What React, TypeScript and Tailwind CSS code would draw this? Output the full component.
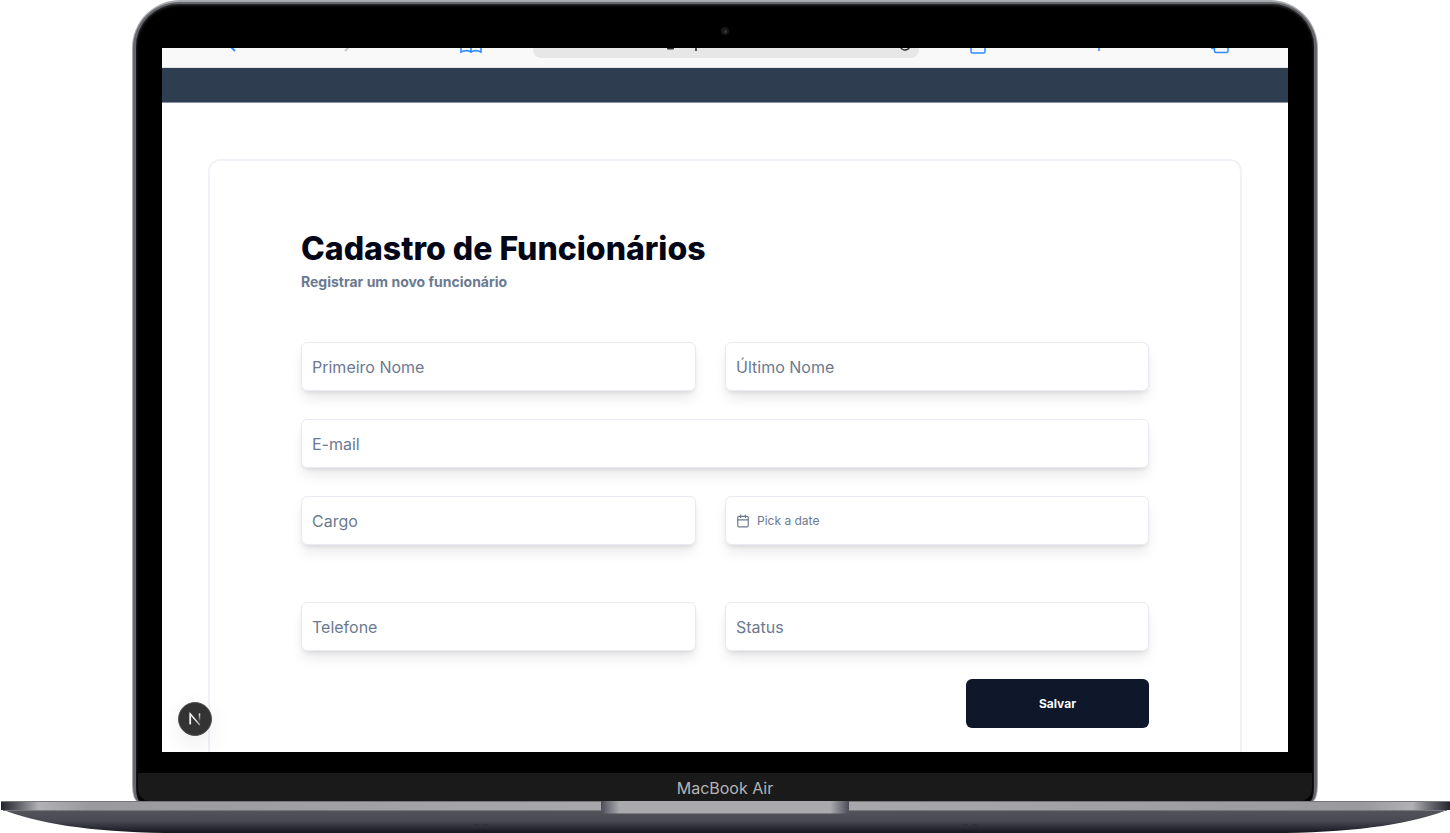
import { Calendar } from 'lucide-react';

const fieldBox =
  'h-[49px] w-full min-w-0 rounded-md border border-[#e9ebf2] bg-white px-[10px] text-left shadow-[0_9px_14px_-2px_rgba(0,0,0,0.09),0_3px_5px_-2px_rgba(0,0,0,0.10)] outline-none';

type FieldProps = { label: string; name: string; type?: string; wide?: boolean };

function Field({ label, name, type = 'text', wide = false }: FieldProps) {
  return (
    <div className={wide ? 'col-span-2 grid items-center' : 'grid items-center'}>
      <input
        id={name}
        className={`${fieldBox} peer col-start-1 row-start-1 text-base text-slate-900`}
        name={name}
        type={type}
        placeholder=" "
      />
      <label
        htmlFor={name}
        className="pointer-events-none z-10 col-start-1 row-start-1 justify-self-start px-[11px] pt-px text-base leading-6 text-[#6b7a90] peer-[:not(:placeholder-shown)]:invisible"
      >
        {label}
      </label>
    </div>
  );
}

function BrowserToolbar() {
  return (
    <div className="flex h-5 shrink-0 items-end gap-[51px] overflow-hidden border-b border-[#dfe2e5] bg-[#f9f9f9] pl-[66px] pr-[59px] text-[#2f8bff]">
      <div className="flex h-10 basis-[254px] grow items-center justify-between">
        <svg className="h-10 w-[10px]" viewBox="0 0 10 40" fill="none" stroke="currentColor" strokeWidth="2">
          <path d="m7 8-8 8 8 8" />
        </svg>
        <svg className="h-10 w-[10px]" viewBox="0 0 10 40" fill="none" stroke="#c8c8ca" strokeWidth="2">
          <path d="m1 8 8 8-8 8" />
        </svg>
        <svg className="h-10 w-[22px]" viewBox="0 0 22 40" fill="none" stroke="currentColor" strokeWidth="1.6">
          <path d="M1 11c4-2 7-2 10 0 3-2 6-2 10 0v14c-4-2-7-2-10 0-3-2-6-2-10 0zM11 11v14" />
        </svg>
      </div>
      <div className="flex h-10 basis-[386px] grow items-start">
        <div className="flex h-[31px] w-full items-start justify-between rounded-lg bg-[#e7e7e7] pl-[133px] pr-[5px] text-[#2b2b2f]">
          <svg className="h-[30px] w-9" viewBox="0 0 36 30" fill="none">
            <rect x="1" y="13" width="7" height="9.5" rx="1" fill="currentColor" />
            <path d="M30 16v8" stroke="currentColor" strokeWidth="1.6" />
          </svg>
          <svg className="h-[30px] w-[18px]" viewBox="0 0 18 30" fill="none" stroke="currentColor" strokeWidth="1.4">
            <path d="M14 18.500a5 5 0 1 1-2-4.500" />
          </svg>
        </div>
      </div>
      <div className="flex h-10 basis-[259px] grow items-center justify-between">
        <svg className="h-10 w-4" viewBox="0 0 16 40" fill="none" stroke="currentColor" strokeWidth="1.5">
          <path d="M5 12H1v12.500A1.500 1.500 0 0 0 2.500 26h11a1.500 1.500 0 0 0 1.500-1.500V12h-4M8 20V6M4 10l4-4 4 4" />
        </svg>
        <svg className="h-10 w-[18px]" viewBox="0 0 18 40" fill="none" stroke="currentColor" strokeWidth="1.600">
          <path d="M9 8v16M1 16h16" />
        </svg>
        <svg className="h-10 w-[18px]" viewBox="0 0 18 40" fill="none" stroke="currentColor" strokeWidth="1.500">
          <rect x="3.500" y="11.500" width="13.500" height="14" rx="1.500" />
          <path d="M3.500 21.500h-2A1.500 1.500 0 0 1 0 20V9.500A1.500 1.500 0 0 1 1.500 8H12a1.500 1.500 0 0 1 1.500 1.500v2" />
        </svg>
      </div>
    </div>
  );
}

function EmployeeForm() {
  return (
    <section className="flex-1 px-[46px] pt-14">
      <div className="h-full rounded-t-xl border-2 border-b-0 border-[#f1f2f7] px-[91px] pt-[72px]">
        <h1 className="text-[32px] font-extrabold leading-8 text-[#020617]">Cadastro de Funcionários</h1>
        <p className="mt-[7px] text-sm font-bold leading-5 text-[#6b7a90]">Registrar um novo funcionário</p>
        <form
          className="mt-[50px] grid grid-cols-[395fr_424fr] gap-x-[29px] gap-y-7"
          onSubmit={(e) => e.preventDefault()}
        >
          <Field label="Primeiro Nome" name="firstName" />
          <Field label="Último Nome" name="lastName" />
          <Field label="E-mail" name="email" type="email" wide />
          <Field label="Cargo" name="role" />
          <button type="button" className={`${fieldBox} flex items-center gap-[7px] text-xs text-[#6b7a90]`}>
            <Calendar className="size-[14px]" aria-hidden="true" />
            Pick a date
          </button>
          <div className="col-span-2 mt-[29px] grid grid-cols-subgrid">
            <Field label="Telefone" name="phone" type="tel" />
            <Field label="Status" name="status" />
          </div>
          <button
            type="submit"
            className="col-start-2 h-[49px] w-[183px] justify-self-end rounded-md bg-[#0f172a] text-xs font-bold text-slate-50"
          >
            Salvar
          </button>
        </form>
      </div>
    </section>
  );
}

function DevBadge() {
  return (
    <button
      type="button"
      aria-label="Next.js"
      className="absolute bottom-4 left-4 flex size-[34px] items-center justify-center rounded-full border border-[#555] bg-[#333] shadow-[0_8px_24px_rgba(0,0,0,0.08)]"
    >
      <svg className="size-[14px]" viewBox="0 0 14 14" fill="none" strokeWidth="1.500">
        <defs>
          <linearGradient id="diagonal" x1="6" y1="6" x2="12" y2="13" gradientUnits="userSpaceOnUse">
            <stop stopColor="#fff" />
            <stop offset="1" stopColor="#fff" stopOpacity="0.500" />
          </linearGradient>
          <linearGradient id="stem" x1="11" y1="1" x2="11" y2="9" gradientUnits="userSpaceOnUse">
            <stop stopColor="#fff" />
            <stop offset="1" stopColor="#fff" stopOpacity="0.100" />
          </linearGradient>
        </defs>
        <path d="M2.300 12V2l9.500 11" stroke="url(#diagonal)" />
        <path d="M2.300 12.500V1.500" stroke="#eee" />
        <path d="M11.500 1.500v8" stroke="url(#stem)" />
      </svg>
    </button>
  );
}

function LaptopBase() {
  return (
    <svg className="block h-8 w-full shrink-0" viewBox="0 0 1450 32" preserveAspectRatio="none" aria-hidden="true">
      <defs>
        <linearGradient id="under" x1="0" y1="0" x2="0" y2="1">
          <stop offset="0" stopColor="#54555c" />
          <stop offset="0.500" stopColor="#484952" />
          <stop offset="1" stopColor="#15151f" />
        </linearGradient>
        <linearGradient id="lip" x1="0" y1="0" x2="1" y2="0">
          <stop offset="0" stopColor="#23242d" />
          <stop offset="0.012" stopColor="#5f6067" />
          <stop offset="0.026" stopColor="#b2b2b6" />
          <stop offset="0.060" stopColor="#99999e" />
          <stop offset="0.500" stopColor="#aaaaaf" />
          <stop offset="0.940" stopColor="#99999e" />
          <stop offset="0.974" stopColor="#b2b2b6" />
          <stop offset="0.988" stopColor="#5f6067" />
          <stop offset="1" stopColor="#23242d" />
        </linearGradient>
        <linearGradient id="notch" x1="0" y1="0" x2="1" y2="0">
          <stop offset="0" stopColor="#4b4b57" />
          <stop offset="0.030" stopColor="#73737d" />
          <stop offset="0.075" stopColor="#a9a9ae" />
          <stop offset="0.925" stopColor="#a9a9ae" />
          <stop offset="0.970" stopColor="#73737d" />
          <stop offset="1" stopColor="#4b4b57" />
        </linearGradient>
      </defs>
      <path d="M1 8C35 22 90 31 165 32H1285C1360 31 1415 22 1450 8z" fill="url(#under)" />
      <path d="M1 0H1450V9H1z" fill="url(#lip)" />
      <path d="M1 .5H1450" stroke="#77787c" />
      <path d="M3 9.500H1447" stroke="#77787e" />
      <path d="M601 0H849V8q0 4.500-5 4.500H606q-5 0-5-4.500z" fill="url(#notch)" />
      <path d="M474 24h5m4 0h5M963 24h5m4 0h5" stroke="#30313a" strokeWidth="2" />
    </svg>
  );
}

export default function App() {
  return (
    <main className="flex h-screen flex-col overflow-hidden bg-white font-['Inter',sans-serif]">
      <div className="flex min-h-0 flex-1 flex-col px-33">
        <div className="flex min-h-0 flex-1 flex-col rounded-[48px_48px_5px_5px/48px_48px_16px_16px] bg-[#a9acae] px-px pt-[2px]">
          <div className="flex min-h-0 flex-1 flex-col rounded-[46px_46px_5px_5px/46px_46px_16px_16px] bg-[#66676c] px-[3px] pt-[2px]">
            <div className="flex min-h-0 flex-1 flex-col rounded-[43px_43px_4px_4px/43px_43px_14px_14px] bg-black px-[2px] shadow-[inset_0_1px_3px_#3a3b3d]">
              <div className="flex h-11 shrink-0 items-center justify-center pt-[10px]">
                <div className="flex size-2 items-center justify-center rounded-full bg-[#17171a]">
                  <div className="size-[3px] rounded-full bg-[#34353a]" />
                </div>
              </div>
              <div className="relative mx-6 flex min-h-0 flex-1 flex-col overflow-hidden bg-white">
                <BrowserToolbar />
                <header className="h-[35px] shrink-0 border-b border-[#8a94a0] bg-[#2e3e50]" />
                <EmployeeForm />
                <DevBadge />
              </div>
              <div className="h-[21px] shrink-0" />
              <div className="flex h-7 shrink-0 items-center justify-center rounded-b-xl bg-[#1a1a1a] pt-[2px] text-base text-[#b4b4b8]">
                MacBook Air
              </div>
            </div>
          </div>
        </div>
      </div>
      <LaptopBase />
    </main>
  );
}
